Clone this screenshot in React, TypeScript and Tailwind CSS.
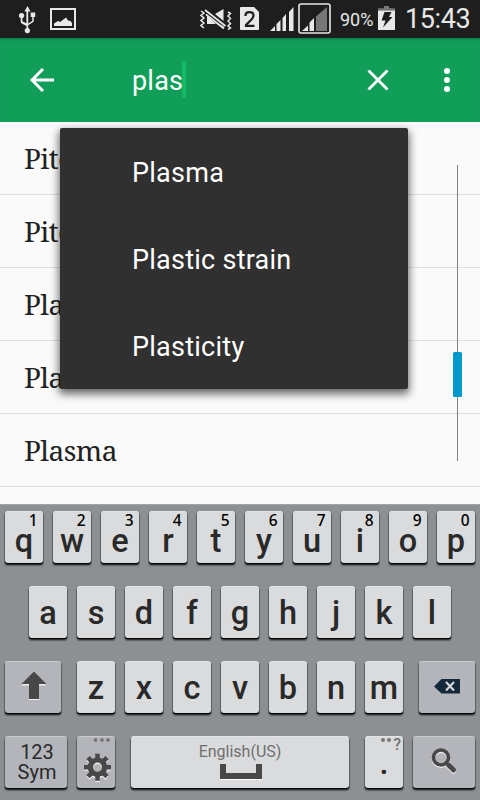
import type { ReactNode } from 'react';

const sans = "font-['Roboto','Noto_Sans',sans-serif]";
const FACE = 'bg-[#dadbdd]';
const DARK = 'bg-[#b4b5ba]';

function StatusBar() {
  return (
    <div className="flex h-[38px] shrink-0 items-start bg-[#1e1e1e] text-[#e8e8e8]">
      <svg className="ml-[18px] shrink-0" width="20" height="38" viewBox="18 0 20 38" fill="#e8e8e8">
        <path d="M27.500 6l3 5.500h-2.300v12l4-2.500v-4h-1.500v-4.500h4.500v4.500h-1.500v4.700l-5.500 3.500v2.800a2.700 2.700 0 1 1-1.700 0v-2l-4.800-2.500q-1-.6-1-2v-3.300a2.700 2.700 0 1 1 1.700 0v3l4 2V11.500h-2z" />
      </svg>
      <svg className="ml-[12px] shrink-0" width="26" height="38" viewBox="50 0 26 38" fill="#e8e8e8">
        <path fillRule="evenodd" d="M50 8h26v22H50zM52 10v18h22V10z" />
        <path d="M54 26v-2.500l4-2.500 2 1 6-4.500 2.500 3.500 1.500-.5 2 2.500V26z" />
      </svg>
      <svg className="ml-[124px] shrink-0" width="32" height="38" viewBox="200 0 32 38">
        <path d="M201 11l3 2-3 2.500 3 2.500-3 2.500 3 2.500-3 2.500 3 2.500M228 12l2.500 1.500-2.500 2.500 2.500 2.500-2.500 2.500 2.500 2.500-2.500 2.500 2.500 2-2.500 1.500" fill="none" stroke="#e8e8e8" strokeWidth="1.500" />
        <path d="M207 15.500v8.500h9zM215 14l8.500-5v12zM217 24l6.500 5v-3z" fill="#e8e8e8" />
        <path d="M205 10l20.500 16M206 14.500L224 28.500" stroke="#e8e8e8" strokeWidth="1.700" />
      </svg>
      <svg className="ml-[8px] shrink-0" width="19" height="38" viewBox="240 0 19 38">
        <path d="M241 7h13l5 5v17q0 1-1 1h-17q-1 0-1-1V8q0-1 1-1z" fill="#e8e8e8" />
        <path d="M245.500 16v-.500q0-3.300 4-3.300t4 3.300q0 2-2.500 4.500l-5 5v.8h8.500" fill="none" stroke="#1e1e1e" strokeWidth="2.200" />
      </svg>
      <svg className="ml-[11px] shrink-0" width="24" height="38" viewBox="270 0 24 38" fill="#e8e8e8">
        <path d="M270 31l5-5v5zM276.500 24l4-4v11h-4zM282.500 18l3.500-4v17h-3.500zM289 12l4.500-5v24H289z" />
      </svg>
      <svg className="ml-[4px] shrink-0" width="33" height="38" viewBox="298 0 33 38" fill="#e8e8e8">
        <rect x="299" y="4" width="31" height="29" rx="2" fill="none" stroke="#e8e8e8" strokeWidth="1.600" />
        <path d="M302 31l6-5.500V31zM309.500 22.500l4.500-4.500v13h-4.500z" />
        <path d="M316 16.500L327 7v24h-11z" fill="#777" />
      </svg>
      <span className="ml-[9px] w-[36px] shrink-0 text-[18px] leading-[40px]">90%</span>
      <svg className="ml-[2px] shrink-0" width="17" height="38" viewBox="378 0 17 38">
        <path d="M378 10.500v-2.200h6V6h5v2.200h6v2.300z" fill="#777" />
        <path d="M378 10.500h17V30h-17z" fill="#e8e8e8" />
        <path d="M384.500 12h7l-2.500 5h3.500L383 27.500l2.500-7h-4z" fill="#1e1e1e" />
      </svg>
      <span className="ml-[10px] shrink-0 text-[27px] leading-[38px] tracking-[-0.400px]">15:43</span>
    </div>
  );
}

function AppBar() {
  return (
    <div className="flex h-[84px] shrink-0 items-center bg-[#119e59] text-white shadow-[inset_0_3px_3px_-2px_rgba(0,0,0,0.25)]">
      <svg className="ml-[30px] shrink-0" width="24" height="24" viewBox="0 0 24 24" fill="none" stroke="#fff" strokeWidth="3">
        <path d="M24 12H2M13 1L2 12l11 11" />
      </svg>
      <span className="mt-[2px] ml-[78px] w-[50px] text-[27px] leading-[36px] tracking-[0.200px]">plas</span>
      <span className="mt-[-2px] h-[37px] w-[4px] shrink-0 bg-[#14b866]" />
      <svg className="mr-[54px] ml-auto shrink-0" width="22" height="22" viewBox="0 0 22 22" stroke="#fff" strokeWidth="2.800">
        <path d="M1.500 1.500l19 19M20.500 1.500l-19 19" />
      </svg>
      <svg className="mr-[29px] shrink-0" width="8" height="24" viewBox="0 0 8 24" fill="#fff">
        <circle cx="4" cy="3" r="3" />
        <circle cx="4" cy="12" r="3" />
        <circle cx="4" cy="21" r="3" />
      </svg>
    </div>
  );
}

const terms = ['Pitch', 'Pitchblende', 'Plane', 'Planet', 'Plasma'];

function TermList() {
  return (
    <div className="relative h-[382px] shrink-0 bg-[#fafafa]">
      <ul className="flex flex-col">
        {terms.map((t) => (
          <li
            key={t}
            className="h-[73px] border-b border-[#dedede] pl-6 font-['Noto_Serif','Droid_Serif','DejaVu_Serif_Condensed','DejaVu_Serif',serif] text-[28px] leading-[72px] tracking-[-0.550px] text-[#212121]"
          >
            {t}
          </li>
        ))}
      </ul>
      <div className="absolute top-[43px] left-[457px] h-[296px] w-px bg-[#808080]" />
      <div className="absolute top-[230px] left-[453px] h-[45px] w-[9px] rounded-[1.500px] bg-[#0099cc]" />
      <div className="absolute top-[6px] left-[60px] flex h-[261px] w-[348px] flex-col rounded-[2px] bg-[#303030] pl-[72px] text-[27px] tracking-[0.250px] text-white shadow-[0_4px_9px_1px_rgba(0,0,0,0.6)]">
        <span className="h-[87px] leading-[90px]">Plasma</span>
        <span className="h-[87px] leading-[90px]">Plastic strain</span>
        <span className="h-[87px] leading-[90px]">Plasticity</span>
      </div>
    </div>
  );
}

function Key({ className, children }: { className: string; children: ReactNode }) {
  return (
    <div
      className={`relative h-[52px] shrink-0 rounded-[3px] text-center text-[#292929] shadow-[inset_0_1px_0_rgba(255,255,255,0.3),0_1.500px_0_#050505,0_2px_1px_1px_rgba(0,0,0,0.35)] ${className}`}
    >
      {children}
    </div>
  );
}

function Letter({ children, low }: { children: string; low?: boolean }) {
  return (
    <span className={`block text-[32.500px] font-medium ${low ? 'leading-[60px]' : 'leading-[54px]'}`}>
      {children}
    </span>
  );
}

function Keyboard() {
  return (
    <div className="flex h-[296px] shrink-0 flex-col gap-[23px] border-t border-[#a2a5a7] bg-[#8c9092] px-[5px] pt-[6px]">
      <div className="flex gap-[10px]">
        {'qwertyuiop'.split('').map((c, i) => (
          <Key key={c} className={`w-[38px] ${FACE}`}>
            <Letter low>{c}</Letter>
            <span className="absolute top-0 right-[5.500px] font-['Noto_Sans',sans-serif] text-[15.500px] leading-[18px] font-medium text-black">
              {(i + 1) % 10}
            </span>
          </Key>
        ))}
      </div>
      <div className="flex gap-[10px] pl-6">
        {'asdfghjkl'.split('').map((c) => (
          <Key key={c} className={`w-[38px] ${FACE}`}>
            <Letter>{c}</Letter>
          </Key>
        ))}
      </div>
      <div className="flex justify-between">
        <Key className={`w-[56px] ${DARK}`}>
          <svg width="56" height="52" viewBox="0 0 56 52">
            <path d="M29 12l12.500 12.500H34V39H24V24.500h-7.500z" fill="#f0f0f0" />
            <path d="M29 10.500L41.500 23H34v15H24V23h-7.500z" fill="#484848" />
          </svg>
        </Key>
        <div className="flex gap-[10px]">
          {'zxcvbnm'.split('').map((c) => (
            <Key key={c} className={`w-[38px] ${FACE}`}>
              <Letter>{c}</Letter>
            </Key>
          ))}
        </div>
        <Key className={`w-[56px] ${DARK}`}>
          <svg width="56" height="52" viewBox="0 0 56 52">
            <path d="M15 25.500L22.500 18H41v14.500H22.500z" fill="#14283b" />
            <path d="M27 21l8 8.500M35 21l-8 8.500" stroke="#d5d5da" strokeWidth="2.200" />
          </svg>
        </Key>
      </div>
      <div className="flex">
        <Key className={`w-[62px] ${DARK}`}>
          <div className="pt-[6px] pl-[2px] text-[20px] leading-[20px]">
            <div>123</div>
            <div>Sym</div>
          </div>
        </Key>
        <Key className={`ml-[10px] w-[38px] ${DARK}`}>
          <svg width="38" height="52" viewBox="0 0 38 52">
            <g fill="#6e6e70">
              <circle cx="18.500" cy="4" r="1.800" />
              <circle cx="25" cy="4" r="1.800" />
              <circle cx="31" cy="4" r="1.800" />
            </g>
            {['#eeeeee', '#484848'].map((color, n) => (
              <g key={color} transform={`translate(20.500 ${32.500 - n * 1.300})`} stroke={color} fill="none">
                <circle r="7.200" strokeWidth="5.200" />
                <path d="M0-8v-5.500M0 8v5.500M-8 0h-5.500M8 0h5.500M5.500-5.500l4-4M-5.500 5.500l-4 4M-5.500-5.500l-4-4M5.500 5.500l4 4" strokeWidth="4.600" />
              </g>
            ))}
          </svg>
        </Key>
        <Key className={`ml-[16px] w-[218px] ${FACE}`}>
          <div className="pt-[6px] text-[16px] leading-[20px] text-[#707070]">English(US)</div>
          <div className="ml-[89px] mt-[2px] h-[15px] w-[42px] border-x-[6px] border-b-[6px] border-[#484848] shadow-[0_1px_0_#fff]" />
        </Key>
        <Key className={`ml-[16px] w-[38px] ${FACE}`}>
          <Letter>.</Letter>
          <span className="absolute top-0 right-[2px] flex items-start gap-[2px] text-[16px] leading-[17px] font-medium text-[#777]">
            <span className="mt-[2px] size-[4px] rounded-full bg-[#777]" />
            <span className="mt-[2px] size-[4px] rounded-full bg-[#777]" />
            <span>?</span>
          </span>
        </Key>
        <Key className={`ml-[10px] w-[62px] ${DARK}`}>
          <svg width="62" height="52" viewBox="0 0 62 52">
            {['#eeeeee', '#484848'].map((color, n) => (
              <g key={color} transform={`translate(0 ${1.200 - n * 1.200})`} stroke={color} fill="none">
                <circle cx="28" cy="21.500" r="7.500" strokeWidth="3.600" />
                <path d="M33 26.500l3 3" strokeWidth="3" />
                <path d="M35.500 29l5 5" strokeWidth="4.800" strokeLinecap="round" />
              </g>
            ))}
          </svg>
        </Key>
      </div>
    </div>
  );
}

export default function App() {
  return (
    <div className={`flex h-[800px] w-[480px] flex-col overflow-hidden ${sans}`}>
      <StatusBar />
      <AppBar />
      <TermList />
      <Keyboard />
    </div>
  );
}
